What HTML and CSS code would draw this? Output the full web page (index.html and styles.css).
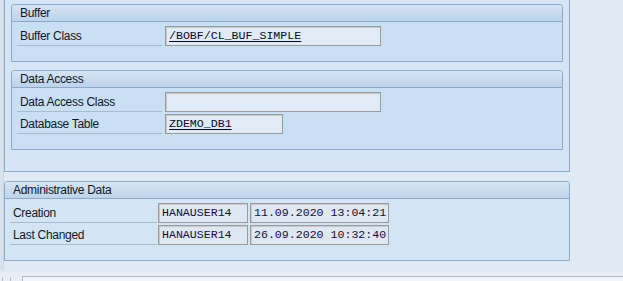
FILE: index.html
```html
<!DOCTYPE html>
<html lang="en">
<head>
    <meta charset="UTF-8">
    <title>Business Object Settings</title>
    <link rel="stylesheet" href="styles.css">
</head>
<body>

    <div class="screen">
        <div class="side-strip"></div>

        <div class="content">
            <!-- upper panel, scrolled so its top edge is out of view -->
            <div class="outer-panel">

                <div class="group">
                    <div class="group-title">Buffer</div>
                    <div class="group-body">
                        <div class="row">
                            <span class="label">Buffer Class</span>
                            <span class="field field-edit wide">/BOBF/CL_BUF_SIMPLE</span>
                        </div>
                    </div>
                </div>

                <div class="group">
                    <div class="group-title">Data Access</div>
                    <div class="group-body">
                        <div class="row">
                            <span class="label">Data Access Class</span>
                            <span class="field field-edit wide"></span>
                        </div>
                        <div class="row">
                            <span class="label">Database Table</span>
                            <span class="field field-edit short">ZDEMO_DB1</span>
                        </div>
                    </div>
                </div>

            </div>

            <!-- Administrative Data -->
            <div class="group admin">
                <div class="group-title">Administrative Data</div>
                <div class="group-body">
                    <div class="row">
                        <span class="label">Creation</span>
                        <span class="field field-read user">HANAUSER14</span>
                        <span class="field field-read stamp">11.09.2020 13:04:21</span>
                    </div>
                    <div class="row">
                        <span class="label">Last Changed</span>
                        <span class="field field-read user">HANAUSER14</span>
                        <span class="field field-read stamp">26.09.2020 10:32:40</span>
                    </div>
                </div>
            </div>
        </div>
    </div>

    <div class="status-bar">
        <span class="tiny-btn"></span>
        <span class="tiny-btn"></span>
        <span class="status-box"></span>
    </div>

</body>
</html>
```

FILE: styles.css
```css
* {
    margin: 0;
    padding: 0;
    box-sizing: border-box;
}
body {
    background-color: #dfeaf5;
    font-family: "Liberation Sans", Arial, sans-serif;
    font-size: 12px;
    letter-spacing: -0.3px;
    color: #101828;
    width: 623px;
    height: 281px;
    overflow: hidden;
}
.screen {
    display: flex;
    height: 272px;
}
.side-strip {
    width: 4px;
    background-color: #d6e2ee;
    border-right: 1px solid #c9d6e4;
    height: 270px;
}
.content {
    width: 566px;
}
.outer-panel {
    background-color: #d5e5f4;
    border: 1px solid #8eaacb;
    border-top: none;
    padding: 4px 6px 21px 6px;
    display: flex;
    flex-direction: column;
    gap: 8px;
    height: 172px;
}
.group {
    background-color: #c9dff3;
    border: 1px solid #8eaacb;
    border-radius: 3px 3px 0 0;
}
.group-title {
    height: 17px;
    line-height: 17px;
    padding-left: 8px;
    background: linear-gradient(#d6e4f2, #bcd3ea);
    border-bottom: 1px solid #8eaacb;
    border-radius: 2px 2px 0 0;
}
.group-body {
    padding: 4px 5px 15px 5px;
    display: flex;
    flex-direction: column;
    gap: 2px;
}
.row {
    display: flex;
    align-items: center;
    height: 20px;
}
.label {
    width: 145px;
    height: 20px;
    line-height: 20px;
    padding-left: 3px;
    border-bottom: 1px solid #a9bccf;
    margin-right: 3px;
}
.field {
    height: 20px;
    line-height: 18px;
    padding-left: 3px;
    font-family: "Liberation Mono", "Courier New", monospace;
    font-size: 11.6px;
    letter-spacing: 0;
    color: #08082a;
    border: 1px solid #9b9b9b;
    box-shadow: inset 1px 1px 0 #c9c9c9;
    white-space: pre;
}
.field-edit {
    background-color: #e0ebf5;
    text-decoration: underline;
    text-underline-offset: 2px;
}
.wide {
    width: 216px;
}
.short {
    width: 118px;
}
.admin {
    margin-top: 9px;
    width: 566px;
    background-color: #d3e5f4;
}
.admin .group-title {
    background: linear-gradient(#d6e4f2, #bdd4ea);
}
.admin .label {
    width: 147px;
    margin-right: 1px;
}
.field-read {
    background-color: #dde8f3;
    color: #1a0c3c;
}
.user {
    width: 90px;
    margin-right: 2px;
}
.stamp {
    width: 139px;
}
.status-bar {
    height: 9px;
    background-color: #e8eef5;
    display: flex;
    align-items: flex-end;
    gap: 6px;
    padding-left: 2px;
}
.tiny-btn {
    width: 2px;
    height: 4px;
    border-left: 1px solid #b8c2cc;
}
.status-box {
    flex: 1;
    height: 5px;
    margin-left: 4px;
    border-top: 1px solid #b0b8c2;
    border-left: 1px solid #b0b8c2;
    background-color: #f2f5f9;
}
```
